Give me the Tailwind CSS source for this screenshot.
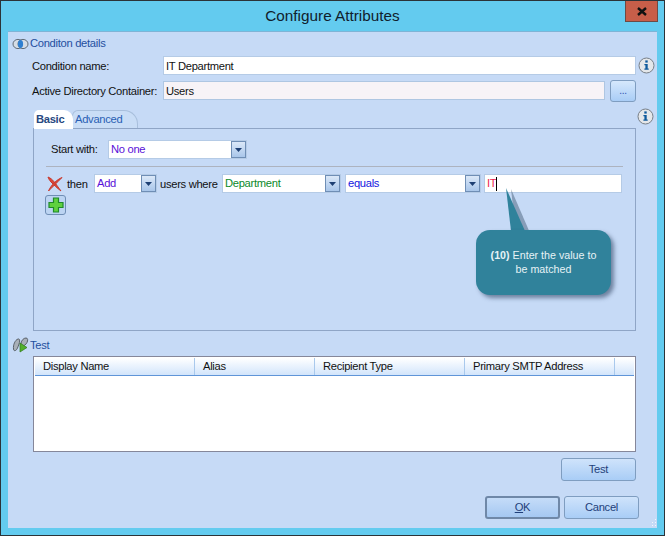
<!DOCTYPE html>
<html lang="en">
  <head>
    <meta charset="UTF-8" />
    <title>Configure Attributes</title>
    <script src="https://cdn.jsdelivr.net/npm/@tailwindcss/browser@4"></script>
  </head>
  <body class="w-[665px] h-[536px] overflow-hidden bg-[#63cbef] font-['Liberation_Sans',sans-serif] text-[11.2px] tracking-[-0.3px] text-[#111]">
    <div class="relative w-[665px] h-[536px] border border-[#2b3338] flex flex-col">
      <!-- title bar -->
      <div class="h-[30px] shrink-0 flex items-center justify-center text-[15.3px] tracking-normal text-[#10202c]">Configure Attributes</div>
      <div class="absolute right-[6px] top-0 w-[33px] h-[21px] bg-[#c75e49] border border-[#6d4a44] border-t-0 flex items-center justify-center">
        <svg width="10" height="9" viewBox="0 0 10 9"><path d="M1 1l8 7M9 1L1 8" stroke="#111" stroke-width="2.4"/></svg>
      </div>

      <!-- main panel -->
      <div class="mx-[7px] h-[497px] bg-[#c6daf6] border-t border-[#7fb4d6] flex flex-col">
        <!-- condition details -->
        <div class="h-[23px] flex items-center pl-[4px] gap-[1px] text-[#1f4f9f]">
          <svg width="17" height="12" viewBox="0 0 17 12"><ellipse cx="6" cy="6" rx="5" ry="4.6" fill="#d5dde6" stroke="#5f6b78"/><ellipse cx="11" cy="6" rx="5" ry="4.6" fill="#d5dde6" stroke="#5f6b78"/><ellipse cx="8.5" cy="6" rx="2.6" ry="4" fill="#2f7fd0"/></svg>
          <span>Conditon details</span>
        </div>

        <div class="mt-[1px] ml-[24px] flex items-center h-[19px]">
          <span class="w-[131px] shrink-0 pt-[2px]">Condition name:</span>
          <div class="w-[473px] h-[19px] bg-white border border-[#b5cbe6] flex items-center px-[2px] pt-[2px]">IT Department</div>
          <svg class="ml-[2px]" width="17" height="17" viewBox="0 0 17 17"><circle cx="8.5" cy="8.5" r="7.5" fill="#e4e7ea" stroke="#777f88"/><rect x="7.3" y="3.4" width="2.4" height="2.2" fill="#0f5a9c"/><path d="M6.4 7h3.3v4.6h1v1.2H6.4v-1.2h1V8.2h-1z" fill="#0f5a9c"/></svg>
        </div>

        <div class="mt-[6px] ml-[24px] flex items-center h-[19px]">
          <span class="w-[131px] shrink-0 whitespace-nowrap pt-[2px]">Active Directory Container:</span>
          <div class="w-[442px] h-[19px] bg-[#f7f3f7] border border-[#aec6e2] flex items-center px-[2px] pt-[2px]">Users</div>
          <div class="ml-[5px] w-[26px] h-[22px] rounded-[3px] border border-[#7f9dc0] bg-gradient-to-b from-[#d6e8fc] to-[#a9cdf6] flex items-center justify-center text-[#2a4fb0] text-[10px] leading-none">...</div>
        </div>

        <!-- tabs -->
        <div class="relative mt-[10px] ml-[25px] w-[603px] h-[221px] flex flex-col">
          <div class="h-[18px] flex items-end relative">
            <div class="relative z-10 w-[39px] h-[18px] ml-[1px] bg-white rounded-t-[5px] rounded-tr-[9px] font-bold text-[#27487f] pl-[2px] flex items-center">Basic</div>
            <div class="w-[66px] h-[18px] -ml-[1px] bg-[#c9ddf6] border border-b-0 border-[#a8bfdc] rounded-t-[6px] rounded-tr-[14px] text-[#2a60b4] pl-[2px] flex items-center">Advanced</div>
            <svg class="absolute right-[-18px] top-[-2px]" width="17" height="17" viewBox="0 0 17 17"><circle cx="8.5" cy="8.5" r="7.5" fill="#e4e7ea" stroke="#777f88"/><rect x="7.3" y="3.4" width="2.4" height="2.2" fill="#0f5a9c"/><path d="M6.4 7h3.3v4.6h1v1.2H6.4v-1.2h1V8.2h-1z" fill="#0f5a9c"/></svg>
          </div>
          <div class="relative h-[203px] border border-[#8fa5c6] flex flex-col">
            <div class="absolute left-0 -top-[1px] w-[39px] h-[1px] bg-white"></div>
            <div class="mt-[11px] ml-[17px] flex items-center h-[19px]">
              <span class="w-[57px] shrink-0">Start with:</span>
              <div class="w-[139px] h-[19px] bg-white border border-[#b5cbe6] flex items-center justify-between pl-[2px] text-[#5a10d8]">No one
                <span class="w-[15px] h-[17px] bg-gradient-to-b from-[#dbe8f8] to-[#a9c6ea] border border-[#6f8eb5] flex items-center justify-center"><svg width="7" height="4" viewBox="0 0 7 4"><path d="M0 0h7L3.5 4z" fill="#1d3f73"/></svg></span>
              </div>
            </div>
            <div class="mt-[7px] ml-[12px] w-[577px] h-[1px] bg-[#adb3bf]"></div>
            <div class="mt-[7px] ml-[12px] flex items-center h-[19px]">
              <svg class="ml-[1px]" width="16" height="16" viewBox="0 0 16 16"><path d="M1 1C6 3 8 7 14 15C10 12 7 9 4 6C2.500 4 1.500 3 1 1z" fill="#d8473a" stroke="#c8382c" stroke-width="1"/><path d="M15 1.500C10 3.500 4 9 1.500 15C4.500 12 10 6.500 15 1.500z" fill="#d8473a" stroke="#c8382c" stroke-width="1"/></svg>
              <span class="ml-[4px] w-[27px] shrink-0 pt-[1px]">then</span>
              <div class="w-[63px] h-[19px] bg-white border border-[#b5cbe6] flex items-center justify-between pl-[2px] text-[#5a10d8]">Add
                <span class="w-[15px] h-[17px] bg-gradient-to-b from-[#dbe8f8] to-[#a9c6ea] border border-[#6f8eb5] flex items-center justify-center"><svg width="7" height="4" viewBox="0 0 7 4"><path d="M0 0h7L3.5 4z" fill="#1d3f73"/></svg></span>
              </div>
              <span class="w-[65px] shrink-0 pl-[3px] pt-[1px] whitespace-nowrap">users where</span>
              <div class="w-[119px] h-[19px] bg-white border border-[#b5cbe6] flex items-center justify-between pl-[2px] text-[#0b8a2a]">Department
                <span class="w-[15px] h-[17px] bg-gradient-to-b from-[#dbe8f8] to-[#a9c6ea] border border-[#6f8eb5] flex items-center justify-center"><svg width="7" height="4" viewBox="0 0 7 4"><path d="M0 0h7L3.5 4z" fill="#1d3f73"/></svg></span>
              </div>
              <div class="ml-[4px] w-[136px] h-[19px] bg-white border border-[#b5cbe6] flex items-center justify-between pl-[2px] text-[#1414e0]">equals
                <span class="w-[15px] h-[17px] bg-gradient-to-b from-[#dbe8f8] to-[#a9c6ea] border border-[#6f8eb5] flex items-center justify-center"><svg width="7" height="4" viewBox="0 0 7 4"><path d="M0 0h7L3.5 4z" fill="#1d3f73"/></svg></span>
              </div>
              <div class="ml-[3px] w-[138px] h-[19px] bg-white border border-[#b5cbe6] flex items-center pl-[2px] text-[#ef1f4f]">IT<span class="w-[1px] h-[14px] bg-black"></span></div>
            </div>
            <div class="mt-[2px] ml-[11px] w-[21px] h-[20px] rounded-[3px] border border-[#6f8eb5] bg-[#bcd4f2] flex items-center justify-center">
              <svg width="16" height="16" viewBox="0 0 16 16"><path d="M5.500 1h5v4.500H15v5h-4.500V15h-5v-4.500H1v-5h4.500z" fill="#5fd13f" stroke="#1f8a2a" stroke-width="1.200"/></svg>
            </div>

            <!-- callout -->
            <svg class="absolute left-[471px] top-[59px]" width="30" height="48" viewBox="0 0 30 48"><path d="M3 0L8 44h14z" fill="#47607a" opacity=".5" transform="translate(3 1)"/><path d="M1 0L6 43h14z" fill="#30829b"/></svg>
            <div class="absolute left-[442px] top-[101px] w-[135px] h-[65px] rounded-[14px] bg-[#30829b] shadow-[3px_3px_4px_rgba(50,70,100,0.6)] flex items-center justify-center text-center text-[#e6f2f6] text-[10.700px] tracking-normal leading-[14px] px-[10px] pb-[2px]"><p><b>(10)</b> Enter the value to be matched</p></div>
          </div>
        </div>

        <!-- test -->
        <div class="mt-[3px] h-[22px] flex items-center pl-[4px] gap-[1px] text-[#1f4f9f]">
          <svg width="17" height="16" viewBox="0 0 17 16"><path d="M1.500 12C1 8 3 3 6 2c2-.5 2 2 1 5s-2 6-3.500 6.500C2.500 14 1.700 13.500 1.500 12z" fill="#a9b0b8" stroke="#59616a"/><path d="M9 6c.5-2.500 2.500-5 5-5 2 0 2 2.500 1 4.500S12 9 10.500 9C9.500 9 8.800 7.500 9 6z" fill="#a9b0b8" stroke="#59616a"/><path d="M8 6l7 4.500L8 15z" fill="#53b02c" stroke="#2f7a1a" stroke-width=".7"/></svg>
          <span>Test</span>
        </div>
        <div class="ml-[25px] w-[603px] h-[96px] bg-white border border-[#85879a] flex flex-col">
          <div class="mt-[1px] mx-[1px] h-[18px] shrink-0 bg-gradient-to-b from-white to-[#d2e5fb] border-b border-[#5f95d8] flex items-center">
            <span class="w-[160px] shrink-0 pl-[8px] border-r border-[#a9c9ec]">Display Name</span>
            <span class="w-[120px] shrink-0 pl-[8px] border-r border-[#a9c9ec]">Alias</span>
            <span class="w-[150px] shrink-0 pl-[8px] border-r border-[#a9c9ec]">Recipient Type</span>
            <span class="w-[150px] shrink-0 pl-[8px] border-r border-[#a9c9ec]">Primary SMTP Address</span>
          </div>
        </div>
        <div class="mt-[6px] ml-[553px] w-[75px] h-[23px] rounded-[3px] border border-[#7f9dc0] bg-gradient-to-b from-[#cfe3fb] to-[#a9cdf6] flex items-center justify-center text-[#1f3f7a]">Test</div>
        <div class="mt-[15px] ml-[477px] flex gap-[4px]">
          <div class="w-[75px] h-[23px] rounded-[3px] border-2 border-[#6f88a8] bg-gradient-to-b from-[#c5dcf8] to-[#a5c8f2] flex items-center justify-center text-[#1f3f7a]"><span><u>O</u>K</span></div>
          <div class="w-[75px] h-[23px] rounded-[3px] border border-[#7f9dc0] bg-gradient-to-b from-[#cfe3fb] to-[#a9cdf6] flex items-center justify-center text-[#1f3f7a]">Cancel</div>
        </div>
      </div>
      <!-- resize grip -->
      <svg class="absolute left-[649px] top-[517px]" width="7" height="10" viewBox="0 0 7 10"><path d="M5 1h1v1H5zM5 4h1v1H5zM5 7h1v1H5zM2 7h1v1H2zM2 4h1v1H2z" fill="#f2f6fb"/></svg>
    </div>
  </body>
</html>
